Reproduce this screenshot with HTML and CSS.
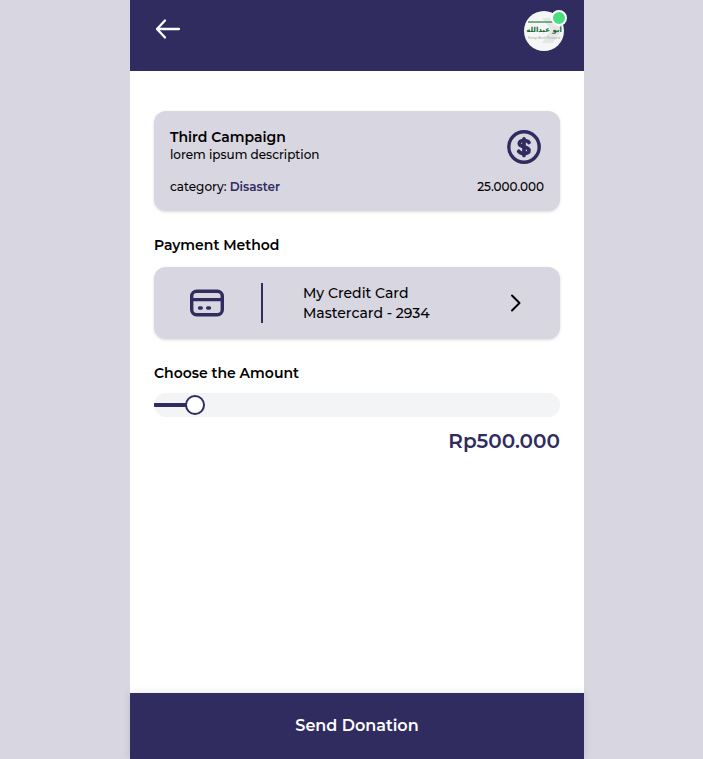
FILE: index.html
```html
<!DOCTYPE html>
<html lang="en">
<head>
<meta charset="utf-8">
<meta name="viewport" content="width=device-width, initial-scale=1">
<title>Donation</title>
<link rel="stylesheet" href="styles.css">
</head>
<body>
<div class="page">
  <div class="app">
    <header class="topbar">
      <a class="back" href="#" aria-label="Back">
        <svg width="28" height="28" viewBox="0 0 28 28" fill="none" stroke="currentColor" stroke-width="2.3" stroke-linecap="round" stroke-linejoin="round"><path d="M25 14H3M11 5.500 3 14l8 8.500"/></svg>
      </a>
      <a class="avatar" href="#" aria-label="Profile">
        <svg width="40" height="40" viewBox="0 0 40 40">
          <defs><clipPath id="disc"><circle cx="20" cy="20" r="20"/></clipPath></defs>
          <g clip-path="url(#disc)">
            <rect width="40" height="40" fill="#f5f7f6"/>
            <path d="M18 7h11l9 12-9 13H18l9-13z" fill="#e3e8e6"/>
            <path d="M4 11h26" stroke="#4f9568" stroke-width="1.300"/>
            <text class="logo-name" x="20" y="21" text-anchor="middle">أبو عبدالله</text>
            <text class="logo-line" x="20" y="28" text-anchor="middle">Keep And Reward</text>
          </g>
        </svg>
        <span class="status"></span>
      </a>
    </header>

    <main class="content">
      <section class="card campaign">
        <div class="row">
          <div>
            <h1 class="title">Third Campaign</h1>
            <p class="small">lorem ipsum description</p>
          </div>
          <svg class="coin" width="40" height="40" viewBox="0 0 40 40" fill="none" stroke="currentColor" stroke-linecap="round"><circle cx="20" cy="20" r="15.200" stroke-width="3.400"/><path d="M25 15.500c-1-1.600-2.700-2-5-2-3 0-4.700 1.100-4.700 3.100 0 4.700 9.700 2 9.700 6.600 0 2.200-2 3.300-5 3.300-2.400 0-4.300-.6-5.300-2.200M20 11.800v16.600" stroke-width="3.700"/></svg>
        </div>
        <div class="row small">
          <p>category: <strong>Disaster</strong></p>
          <p>25.000.000</p>
        </div>
      </section>

      <section>
        <h2 class="heading">Payment Method</h2>
        <button class="card method" type="button">
          <span class="method-icon"><svg width="40" height="40" viewBox="0 0 40 40" fill="none" stroke="currentColor" stroke-width="3.400" stroke-linecap="round"><rect x="5.700" y="8.200" width="30.600" height="23.600" rx="5"/><path d="M6 16.600h30M13.500 25h1.800M21.700 25h1.800"/></svg></span>
          <span class="method-name">My Credit Card<br>Mastercard - 2934</span>
          <svg class="chevron" width="24" height="24" viewBox="0 0 24 24" fill="none" stroke="currentColor" stroke-width="2" stroke-linecap="round" stroke-linejoin="round"><path d="M8 4.500 15.500 12 8 19.500"/></svg>
        </button>
      </section>

      <section>
        <label class="heading" for="amount">Choose the Amount</label>
        <input class="slider" id="amount" type="range" min="0" max="6250000" step="50000" value="500000">
        <output class="total" for="amount">Rp500.000</output>
      </section>
    </main>

    <button class="send" type="button">Send Donation</button>
  </div>
</div>
</body>
</html>
```
FILE: styles.css
```css
:root {
  --navy: #302c5f;
  --lilac: #d8d6e0;
}

* {
  box-sizing: border-box;
  margin: 0;
}

body {
  background: var(--lilac);
  color: #000;
  font-family: Montserrat, Inter, "Liberation Sans", sans-serif;
  font-weight: 500;
}

button {
  border: 0;
  font: inherit;
  cursor: pointer;
}

svg {
  display: block;
}

.page {
  display: grid;
  grid-template-columns: 130fr 454fr 119fr;
  min-height: 100vh;
}

.app {
  grid-column: 2;
  display: flex;
  flex-direction: column;
  background: #fff;
}

.topbar {
  display: flex;
  justify-content: space-between;
  padding: 11px 20px 20px 24px;
  background: var(--navy);
}

.back {
  padding-top: 4px;
  color: #fff;
}

.avatar {
  position: relative;
}

.status {
  position: absolute;
  top: -1px;
  right: -3px;
  width: 16px;
  height: 16px;
  border: 2px solid #fff;
  border-radius: 50%;
  background: #4ade80;
}

.logo-name {
  font: bold 7px "DejaVu Sans", sans-serif;
  fill: #176536;
}

.logo-line {
  font: 4px "Liberation Sans", sans-serif;
  fill: #a9b0ac;
}

.content {
  flex: 1;
  display: flex;
  flex-direction: column;
  gap: 24px;
  padding: 40px 24px;
}

.card {
  border-radius: 12px;
  background: var(--lilac);
  box-shadow: 0 1px 3px rgb(0 0 0 / 15%);
}

.campaign {
  display: flex;
  flex-direction: column;
  gap: 12px;
  padding: 16px;
}

.row {
  display: flex;
  justify-content: space-between;
}

.title {
  font-size: 14px;
  font-weight: 600;
  line-height: 20px;
}

.small {
  font-size: 12px;
  line-height: 16px;
}

.small strong {
  color: var(--navy);
  font-weight: 600;
}

.coin,
.method-icon {
  color: var(--navy);
}

.heading {
  display: block;
  font-size: 14px;
  font-weight: 600;
  line-height: 20px;
}

.method {
  display: flex;
  align-items: center;
  width: 100%;
  margin-top: 12px;
  padding: 16px 32px;
  color: #000;
  font-size: 14px;
  line-height: 20px;
  text-align: left;
}

.method-icon {
  padding-right: 35px;
  border-right: 2px solid var(--navy);
}

.method-name {
  flex: 1;
  padding-left: 40px;
}

.slider {
  appearance: none;
  display: block;
  width: 100%;
  height: 24px;
  margin: 10px 0 12px;
  border-radius: 12px;
  background: linear-gradient(var(--navy), var(--navy)) left center / 10% 4px no-repeat #f3f4f6;
}

.slider::-webkit-slider-thumb {
  appearance: none;
  width: 20px;
  height: 20px;
  border: 2px solid var(--navy);
  border-radius: 50%;
  background: #fff;
}

.total {
  display: block;
  color: var(--navy);
  font-size: 20px;
  font-weight: 600;
  line-height: 24px;
  text-align: right;
}

.send {
  padding: 20px;
  background: var(--navy);
  color: #fff;
  font-size: 16px;
  font-weight: 600;
  line-height: 26px;
  box-shadow: 0 0 8px rgb(0 0 0 / 12%);
}
```
